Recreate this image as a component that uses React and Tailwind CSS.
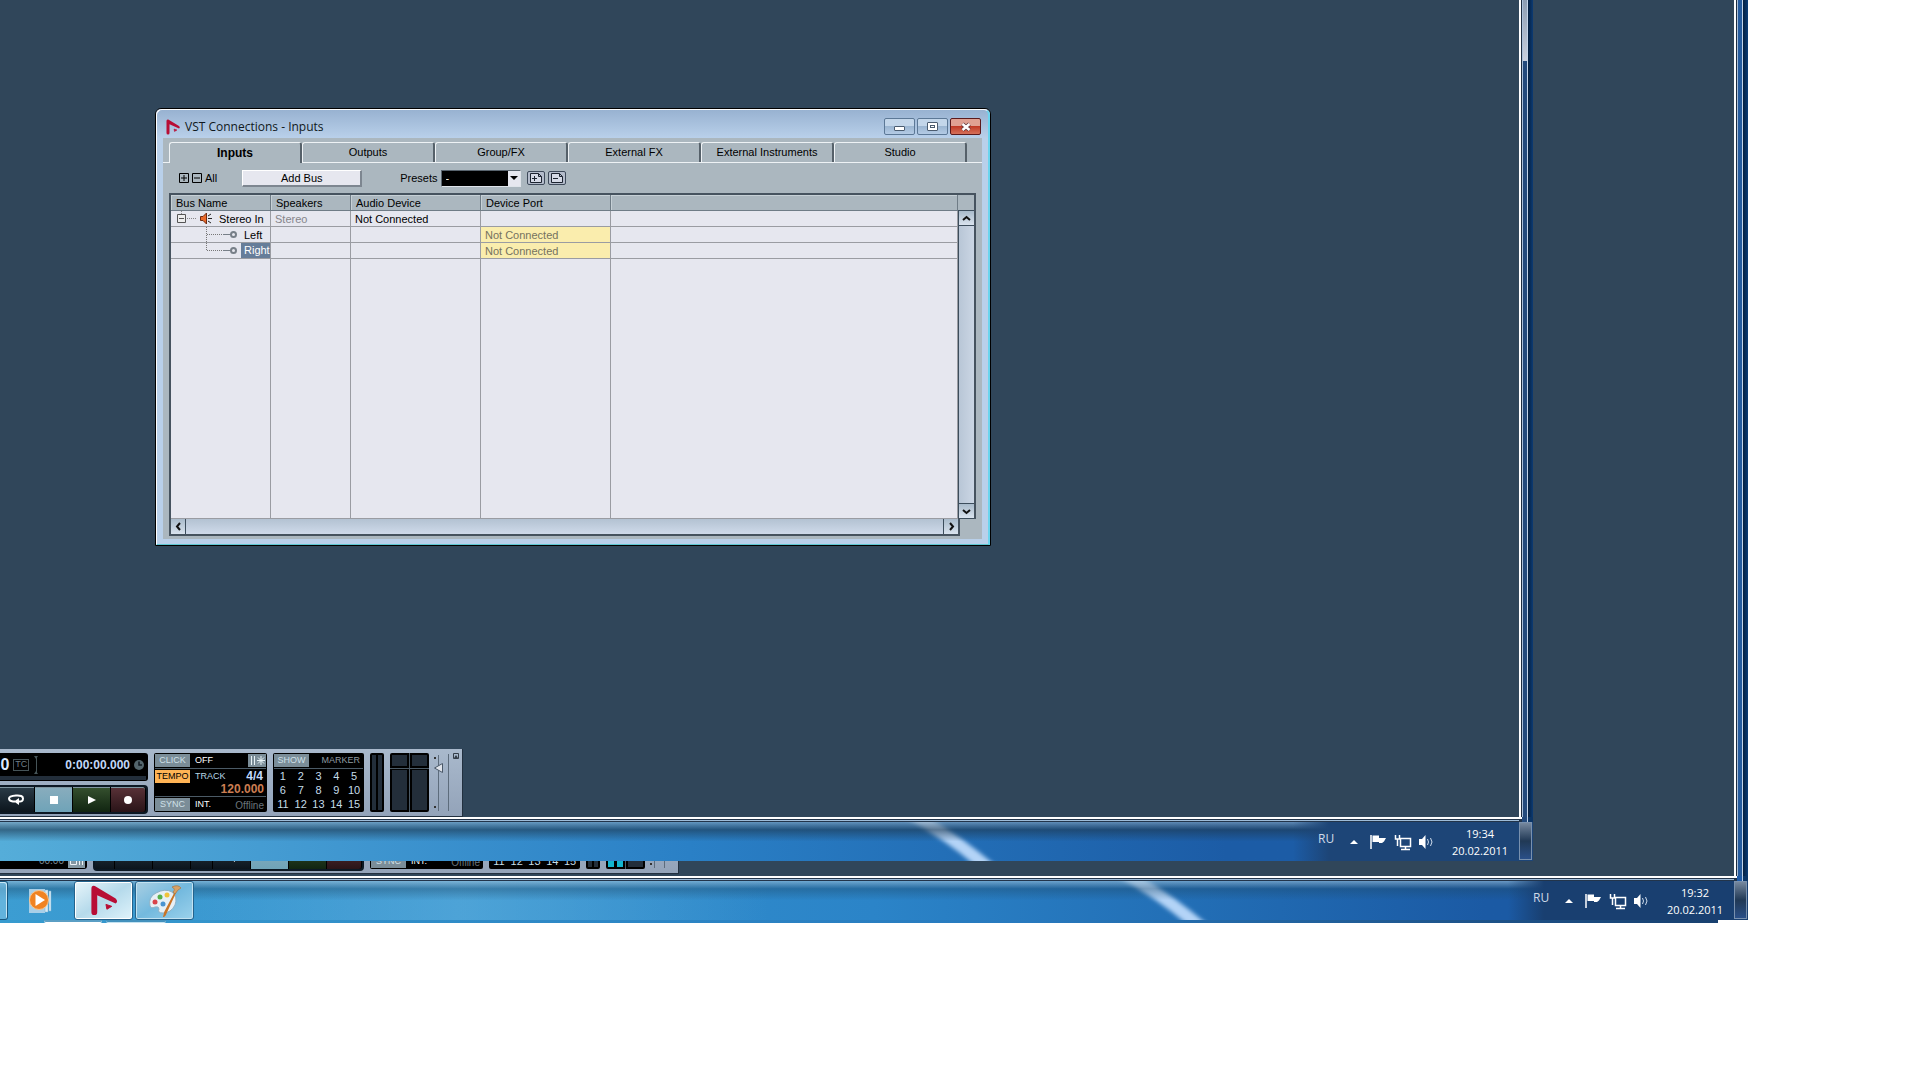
import React from "react";

const TABS = ["Inputs", "Outputs", "Group/FX", "External FX", "External Instruments", "Studio"];
const UI = "font-['Liberation_Sans',Arial,sans-serif]";
const SEGOE = "font-['Open_Sans','Noto_Sans',sans-serif]";

function NuendoMark({ className }) {
  return (
    <svg viewBox="0 0 28 32" className={className} aria-hidden="true">
      <path d="M1 4Q1 0 4.500 1L26 14Q29 17 26 19L7 10.500V28Q7 31 4 31T1 28Z" fill="#b80d35" />
      <path d="M16 20L22 22L17 25Z" fill="#b80d35" stroke="#b80d35" />
    </svg>
  );
}

function CaptionButton({ label, close, children }) {
  return (
    <button
      aria-label={label}
      className={
        close
          ? "flex h-[17px] w-[31px] items-center justify-center rounded-[2px] border border-[#5b1a1c] bg-linear-to-b from-[#e0a193] from-45% via-[#c03a26] via-50% to-[#d5705a]"
          : "flex h-[17px] w-[31px] items-center justify-center rounded-[2px] border border-[#5c7896] bg-linear-to-b from-[#c3d6ea] from-45% via-[#9cb6d2] via-50% to-[#b4cbe5]"
      }
    >
      {children}
    </button>
  );
}

function ScrollButton({ label, d, className }) {
  return (
    <button aria-label={label} className={`flex h-[15px] w-[15px] shrink-0 items-center justify-center border-[#3c4d5c] bg-linear-to-b from-[#a9bbcb] to-[#d9e3ee] ${className}`}>
      <svg width="9" height="9" viewBox="0 0 9 9" fill="none" stroke="#111" strokeWidth="2">
        <path d={d} />
      </svg>
    </button>
  );
}

function PresetButton({ label, d }) {
  return (
    <button aria-label={label} className="flex h-[14px] w-[18px] items-center justify-center rounded-[2px] border border-[#3e4a5a] bg-[#b4bccb]">
      <svg width="14" height="10" viewBox="0 0 14 10" fill="none" stroke="#1c2430">
        <path d="M1.500 .5H9.500L12.500 3.500V9.500H1.500ZM9.500 .5V3.500H12.500" fill="#d5dae6" />
        <path d={d} />
      </svg>
    </button>
  );
}

function ExpandBox({ plus }) {
  return (
    <svg width="10" height="10" viewBox="0 0 10 10" fill="none" stroke="#000">
      <path d={plus ? "M.5 .5H9.500V9.500H.5ZM2 5H8M5 2V8" : "M.5 .5H9.500V9.500H.5ZM2 5H8"} />
    </svg>
  );
}

function BusTable() {
  const cell = "overflow-hidden border-r border-b border-[#9a9ca2] p-0 pl-1 whitespace-nowrap";
  const head = "border-r border-b border-[#6f7c86] p-0 pl-[5px] text-left font-normal shadow-[inset_1px_1px_0_#c6d0d6]";
  return (
    <table className="h-full w-full table-fixed border-separate border-spacing-0 bg-[#e6e7ef] leading-[14px]">
      <colgroup>
        <col className="w-[100px]" />
        <col className="w-[80px]" />
        <col className="w-[130px]" />
        <col className="w-[130px]" />
        <col />
      </colgroup>
      <thead className="bg-[#abb7bf]">
        <tr className="h-4">
          <th className={head}>Bus Name</th>
          <th className={head}>Speakers</th>
          <th className={head}>Audio Device</th>
          <th className={head}>Device Port</th>
          <th className={head}></th>
        </tr>
      </thead>
      <tbody>
        <tr className="h-4">
          <td className={cell}>
            <div className="flex items-center">
              <svg width="38" height="15" viewBox="0 0 38 15" fill="none" className="mr-[6px] shrink-0">
                <path d="M2.500 3.500H10.500V11.500H2.500ZM4 7.500H9" fill="#eee" stroke="#555" />
                <path d="M6.500 0V3M12 7.500H22" stroke="#888" strokeDasharray="1 1" />
                <path d="M25.500 5.500H28L31.500 2V13L28 9.500H25.500Z" fill="#e8692a" stroke="#6d2a10" />
                <path d="M33 5L36 3M33 7.500H37M33 10L36 12" stroke="#222" />
              </svg>
              Stereo In
            </div>
          </td>
          <td className={`${cell} text-[#85858b]`}>Stereo</td>
          <td className={cell}>Not Connected</td>
          <td className={cell}></td>
          <td className={cell}></td>
        </tr>
        {["Left", "Right"].map((name) => (
          <tr key={name} className="h-4">
            <td className={cell}>
              <div className="flex items-center">
                <svg width="66" height="15" viewBox="0 0 66 15" fill="none" className="shrink-0">
                  <path d={name === "Left" ? "M31.500 0V15M32 7.500H47" : "M31.500 0V7.500H47"} stroke="#777" strokeDasharray="1 1" />
                  <path d="M48 7.500H56" stroke="#777f88" />
                  <circle cx="58.500" cy="7.500" r="2.500" stroke="#777f88" strokeWidth="2" />
                </svg>
                <span className={name === "Right" ? "grow bg-[#667d99] pl-[3px] leading-[15px] text-white" : "grow pl-[3px]"}>{name}</span>
              </div>
            </td>
            <td className={cell}></td>
            <td className={cell}></td>
            <td className={`${cell} bg-[#faedad] text-[#75725f]`}>Not Connected</td>
            <td className={cell}></td>
          </tr>
        ))}
        <tr>
          <td className={cell}></td>
          <td className={cell}></td>
          <td className={cell}></td>
          <td className={cell}></td>
          <td className={cell}></td>
        </tr>
      </tbody>
    </table>
  );
}

function VstWindow() {
  return (
    <section className={`absolute top-[108px] left-[155px] flex h-[438px] w-[836px] flex-col rounded-t-md border border-black bg-[#b9d0ea] text-[11px] text-black ${UI}`}>
      <div className="flex grow flex-col rounded-t-md border-t border-r-2 border-b border-l border-t-white border-r-[#6bd5ee] border-b-[#5ec6d2] border-l-white bg-linear-to-b from-[#98b2d1] to-[#b9d0ea] to-[28px] px-[6px] pb-[5px]">
        <header className="flex h-7 items-center pt-[5px] pr-[1px] pl-[3px]">
          <NuendoMark className="h-4 w-[14px]" />
          <h1 className={`ml-[5px] grow text-[12px] leading-4 text-[#101820] ${SEGOE}`}>VST Connections - Inputs</h1>
          <div className="flex gap-[2px]">
            <CaptionButton label="Minimize">
              <span className="mt-1 h-[5px] w-[11px] rounded-[1px] border border-[#4b5c70] bg-white" />
            </CaptionButton>
            <CaptionButton label="Maximize">
              <span className="flex h-[9px] w-[11px] items-center justify-center rounded-[1px] border border-[#4b5c70] bg-white">
                <span className="h-[3px] w-[5px] border border-[#4b5c70]" />
              </span>
            </CaptionButton>
            <CaptionButton label="Close" close>
              <svg width="12" height="10" viewBox="0 0 12 10">
                <path d="M2.500 2L9.500 8M9.500 2L2.500 8" stroke="#5c3438" strokeWidth="4" />
                <path d="M2.500 2L9.500 8M9.500 2L2.500 8" stroke="#fff" strokeWidth="2.500" />
              </svg>
            </CaptionButton>
          </div>
        </header>
        <div className="flex grow flex-col bg-[#abb7bf]">
          <nav className="flex h-[25px] border-b border-[#eef2f5] pt-1 pr-[15px] pl-[6px]">
            {TABS.map((t, i) => (
              <button
                key={t}
                className={
                  i === 0
                    ? "-mb-px h-[21px] flex-1 rounded-t-[3px] border-t border-r-2 border-l border-t-[#eef2f5] border-r-[#56616a] border-l-[#eef2f5] bg-[#abb7bf] text-[12px] font-bold"
                    : "h-5 flex-1 rounded-t-[3px] border-t border-r-2 border-l border-t-[#eef2f5] border-r-[#56616a] border-l-[#eef2f5]"
                }
              >
                {t}
              </button>
            ))}
          </nav>
          <div className="flex h-[30px] items-center pl-4">
            <button className="flex items-center gap-[3px]">
              <ExpandBox plus />
              <ExpandBox />
              <span>All</span>
            </button>
            <button className="ml-[25px] h-[17px] w-[120px] border-t border-r-2 border-b-2 border-l border-t-white border-r-[#7d8690] border-b-[#7d8690] border-l-white bg-[#e6e7ef] leading-[14px]">
              Add Bus
            </button>
            <label htmlFor="preset" className="mr-[3px] ml-[38px]">Presets</label>
            <div className="relative h-[17px] w-20 border border-[#dfe4ea] border-t-[#59646e] border-l-[#59646e] bg-black">
              <select id="preset" className="block h-full w-full appearance-none bg-black pl-1 leading-[14px] text-white">
                <option>-</option>
              </select>
              <span className="pointer-events-none absolute top-0 right-0 flex h-[15px] w-3 items-center justify-center bg-[#e6e7ef]">
                <svg width="8" height="4" viewBox="0 0 8 4"><path d="M0 0H8L4 4Z" /></svg>
              </span>
            </div>
            <div className="ml-[6px] flex gap-[3px]">
              <PresetButton label="Store preset" d="M3 5.500H8M5.500 3V8" />
              <PresetButton label="Remove preset" d="M3 5.500H8" />
            </div>
          </div>
          <div className="mb-[3px] ml-[6px] flex grow flex-col pr-[6px]">
            <div className="flex grow border-2 border-b-0 border-[#46535f]">
              <div className="min-w-0 grow">
                <BusTable />
              </div>
              <div className="flex w-4 shrink-0 flex-col bg-[#abb7bf] pt-[15px]">
                <div className="flex grow flex-col items-stretch justify-between border-t border-b border-l border-[#3c4d5c] bg-linear-to-r from-[#b8c6d6] to-[#cbd6e4]">
                  <ScrollButton label="Scroll up" d="M1 6L4.500 3L8 6" className="border-b" />
                  <ScrollButton label="Scroll down" d="M1 3L4.500 6L8 3" className="border-t" />
                </div>
              </div>
            </div>
            <div className="mr-4 flex h-[17px] justify-between border-r-2 border-b-2 border-l-2 border-[#46535f] bg-linear-to-b from-[#b3c2d2] to-[#cfdaea]">
              <ScrollButton label="Scroll left" d="M6 1L3 4.500L6 8" className="border-r" />
              <ScrollButton label="Scroll right" d="M3 1L6 4.500L3 8" className="border-l" />
            </div>
          </div>
        </div>
      </div>
    </section>
  );
}

function TransportButton({ label, className, children }) {
  return (
    <button aria-label={label} className={`flex shrink-0 items-center justify-center border-r border-black shadow-[inset_0_1px_0_#7f95a0] ${className}`}>
      {children}
    </button>
  );
}

function Tag({ className, children }) {
  return <span className={`flex h-[13px] w-[35px] shrink-0 items-center justify-center ${className}`}>{children}</span>;
}

function FormatPanel() {
  return (
    <div className="mr-[6px] flex h-[59px] w-[87px] items-end justify-end gap-1 rounded-r-[3px] bg-black px-[2px] pb-px text-[10px] text-[#7c8a94]">
      <span>00.00</span>
      <svg width="17" height="13" viewBox="0 0 17 13" fill="none" stroke="#eef3f6">
        <path d="M0 0H17V13H0Z" fill="#8497a2" stroke="none" />
        <path d="M2.500 3.500H8.500V9.500H2.500ZM11.500 3V10M14.500 3V10" />
      </svg>
    </div>
  );
}

function Transport({ active }) {
  const dark = "bg-linear-to-b from-[#2b3c48] to-[#0c151d]";
  return (
    <section className={`flex h-[68px] shrink-0 border-r border-b border-[#22303f] bg-linear-to-b from-[#a9b9cc] to-[#93a3b9] pt-1 text-[9px] text-[#b9d7e6] ${UI}`}>
      {active && <FormatPanel />}
      <div className="w-[271px]">
        <div className="flex h-7 flex-col rounded-[3px] bg-black">
          <div className="flex h-[23px] items-center justify-end pr-1">
            <b className="text-[16px] leading-5 text-[#dbe9ff]">0</b>
            <span className="ml-1 flex h-3 w-4 items-center justify-center border border-[#465458] text-[#6f7f86]">TC</span>
            <svg width="5" height="18" viewBox="0 0 5 18" className="ml-[5px]">
              <path d="M2.500 0V18" stroke="#465458" />
              <path d="M0 0H4L2 3ZM0 18H4L2 15Z" fill="#465458" />
            </svg>
            <b className="ml-[26px] text-[12px] text-[#c2d8f8]">0:00:00.000</b>
            <svg width="10" height="10" viewBox="0 0 10 10" className="ml-1">
              <circle cx="5" cy="5" r="5" fill="#53656c" />
              <path d="M5 1.500V5H8" fill="none" stroke="#101820" strokeWidth="1.500" />
            </svg>
          </div>
          <div className="mx-[2px] h-[4px] bg-[#232e3a]" />
        </div>
        <div className="mt-[4px] flex h-[29px] rounded-[4px] border-2 border-[#0c1824] bg-[#0c1824]">
          <TransportButton label="To start" className={`w-[20px] ${dark}`} />
          <TransportButton label="Rewind" className={`w-[38px] ${dark}`} />
          <TransportButton label="Forward" className={`w-[38px] ${dark}`} />
          <TransportButton label="To end" className={`w-[22px] ${dark}`} />
          <TransportButton label="Cycle" className={`w-[38px] ${dark}`}>
            <svg width="16" height="11" viewBox="0 0 16 11" fill="none" stroke="#fff" strokeWidth="2">
              <path d="M7 7.500H5Q1 7 1 4.500T8 1.500T15 4.500T11 7.500H10" />
              <path d="M6 7.500L11 4V11Z" fill="#fff" stroke="none" />
            </svg>
          </TransportButton>
          <TransportButton label="Stop" className="w-[38px] bg-linear-to-b from-[#89adbd] to-[#6fa3b8]">
            <span className="h-2 w-2 bg-white" />
          </TransportButton>
          <TransportButton label="Play" className="w-[38px] bg-linear-to-b from-[#36512f] to-[#112511]">
            <svg width="8" height="8" viewBox="0 0 8 8"><path d="M0 0L8 4L0 8Z" fill="#fff" /></svg>
          </TransportButton>
          <TransportButton label="Record" className="grow rounded-r-[3px] bg-linear-to-b from-[#5a3238] to-[#2a1418]">
            <span className="h-2 w-2 rounded-full bg-white" />
          </TransportButton>
        </div>
      </div>
      <div className="ml-[6px] flex h-[59px] w-[113px] flex-col rounded-[2px] bg-black px-px pt-px">
        <div className="flex h-[15px] border-b border-[#4b5a66]">
          <Tag className="bg-[#7b8d98] text-[#cfe0e8]">CLICK</Tag>
          <span className="ml-[5px] grow text-white">OFF</span>
          <svg width="18" height="13" viewBox="0 0 18 13" stroke="#e8f2f6" fill="none">
            <path d="M0 0H18V13H0Z" fill="#7b8d98" stroke="none" />
            <path d="M3.500 2V11M6.500 2V11M13 2V11M9 6.500H17M10 3.500L16 9.500M16 3.500L10 9.500" />
          </svg>
        </div>
        <div className="grid h-[28px] grid-cols-[35px_1fr] grid-rows-[14px_12px] border-b border-[#4b5a66] pt-px">
          <Tag className="bg-[#ffb455] text-black">TEMPO</Tag>
          <div className="flex justify-between pr-[3px] pl-[5px] leading-[13px]">
            <span>TRACK</span>
            <b className="text-[12px] text-[#c2dcff]">4/4</b>
          </div>
          <b className="col-span-2 pr-[2px] text-right text-[12px] leading-[11px] text-[#cc7e52]">120.000</b>
        </div>
        <div className="flex h-[15px] pt-px">
          <Tag className="bg-[#7b8d98] text-[#cfe0e8]">SYNC</Tag>
          <span className="ml-[5px] grow text-white">INT.</span>
          <span className="pr-[2px] text-[10px] text-[#6b747c]">Offline</span>
        </div>
      </div>
      <div className="ml-[6px] flex h-[59px] w-[91px] flex-col rounded-[2px] bg-black px-px pt-px">
        <div className="flex h-[15px] justify-between border-b border-[#4b5a66]">
          <Tag className="bg-[#7b8d98] text-[#cfe0e8]">SHOW</Tag>
          <span className="pr-[3px] text-[#909ba2]">MARKER</span>
        </div>
        <div className="grid h-[42px] grid-cols-5 text-center text-[11px] leading-[14px] text-[#c5dde9]">
          {Array.from({ length: 15 }, (_, i) => <span key={i}>{i + 1}</span>)}
        </div>
      </div>
      <div className="ml-[6px] flex h-[59px] w-[14px] justify-between rounded-[2px] bg-black p-[2px]">
        <span className="w-1 bg-[#232e3a]" />
        <span className="w-1 bg-[#232e3a]" />
      </div>
      <div className="ml-[6px] grid h-[59px] w-[39px] grid-cols-2 grid-rows-[11px_1fr] gap-x-[5px] gap-y-[4px] rounded-[2px] bg-[linear-gradient(#4b5a66,#4b5a66),linear-gradient(#4b5a66,#4b5a66),linear-gradient(#000,#000)] bg-[size:1px_100%,100%_1px,100%_100%] bg-[position:19px_0,0_15px,0_0] bg-no-repeat p-[2px]">
        <span className="bg-[#232e3a]" />
        <span className="bg-[#232e3a]" />
        {active ? (
          <span className="flex gap-[3px] bg-black">
            <span className="grow bg-[#12b5cf]" />
            <span className="grow bg-[#12b5cf]" />
          </span>
        ) : (
          <span className="bg-[#232e3a]" />
        )}
        <span className="bg-[#232e3a]" />
      </div>
      <svg width="29" height="59" viewBox="0 0 29 59" fill="none" className="ml-1">
        <path d="M5.500 2V58M15.500 1V58" stroke="#5d6c7c" />
        <path d="M1 4h2v2h-2zM1 53h2v2h-2z" fill="#333" />
        <path d="M9.500 10.500V19.500L1.500 15Z" fill="#dfe3ea" stroke="#4a5868" />
        <path d="M20.500 .5H25.500V5.500H20.500Z" stroke="#333d48" />
        <path d="M21 5L23 2L25 5Z" fill="#333d48" />
      </svg>
    </section>
  );
}

function Tray({ time }) {
  return (
    <div className={`flex h-full items-stretch text-[11px] text-white ${SEGOE}`}>
      <span className="mt-[9px] w-8 text-[12px] leading-4 text-[#cfdbe8]">RU</span>
      <svg width="84" height="18" viewBox="0 0 84 18" fill="none" className="mt-[11px]">
        <path d="M0 11L4 7L8 11Z" fill="#fff" />
        <path d="M21 2V16" stroke="#fff" strokeWidth="1.500" />
        <path d="M22.500 2.500H29V5H36L34 8.500L32 10H29V9H22.500Z" fill="#fff" />
        <path d="M50.500 5.500H60.500V13.500H50.500ZM55.500 14V16M51 16.500H60" stroke="#fff" strokeWidth="1.500" />
        <path d="M45.500 2V6H49.500V2M47.500 6V13" stroke="#fff" strokeWidth="1.500" />
        <path d="M69 6H72L75.500 2V16L72 12H69Z" fill="#fff" />
        <path d="M77.500 6Q79.500 9 77.500 12M80.500 5Q83.500 9 80.500 13" stroke="#cfdcec" />
      </svg>
      <div className="mt-[3px] w-[85px] pl-[7px] text-center leading-[17px]">
        <div>{time}</div>
        <div>20.02.2011</div>
      </div>
      <button aria-label="Show desktop" className="mr-px mb-px w-[13px] border border-[#7991ae] bg-linear-to-b from-[#76889e] via-[#213955] via-50% to-[#2a4f88]" />
    </div>
  );
}

/* White, navy and pale hairlines that frame a maximized window from below. */
function BottomFrame({ edge }) {
  return (
    <div className="flex h-[5px] shrink-0">
      <div className="grow border-t-2 border-white bg-[#22344a]">
        <div className="mt-px h-px bg-[#9dbbd8]" />
      </div>
      <div className="flex w-[14px] shrink-0">
        <div className="w-[3px] border-t-2 border-white bg-[#22344a]" />
        <div className={`grow ${edge}`} />
        <div className="w-px bg-[#b7cbe2]" />
        <div className="w-[5px] bg-[#0b3566]" />
      </div>
    </div>
  );
}

function SideFrame({ children, edge }) {
  return (
    <div className="flex w-[14px] shrink-0">
      <div className="w-[2px] bg-white" />
      <div className="w-px bg-[#1d2c40]" />
      <div className="w-px bg-[#a9bfd8]" />
      <div className={`w-1 ${edge}`}>{children}</div>
      <div className="w-px bg-[#c3d4e8]" />
      <div className="w-[5px] bg-linear-to-r from-[#06203f] to-[#0b3b75]" />
    </div>
  );
}

function Streak({ className }) {
  return (
    <svg width="130" height="40" viewBox="0 0 130 40" preserveAspectRatio="none" className={`pointer-events-none absolute top-0 h-full ${className}`} aria-hidden="true">
      <defs>
        <filter id="soft" x="-20%" y="-20%" width="140%" height="140%"><feGaussianBlur stdDeviation="2" /></filter>
      </defs>
      <path d="M14 -6H38Q74 16 108 46H88Q54 16 14 -6Z" fill="#b4d4f7" filter="url(#soft)" />
    </svg>
  );
}

export default function App() {
  return (
    <main className="flex h-screen min-h-[900px] flex-col overflow-hidden bg-white pr-[172px] pb-[157px]">
      <div className="flex min-h-0 grow">
        <div className="flex min-w-0 grow flex-col bg-[#30465a]">
          <div className="mr-[201px] flex min-h-0 grow flex-col">
            <div className="flex min-h-0 grow">
              <div className="relative flex min-w-0 grow flex-col justify-end">
                <VstWindow />
                <div className="flex w-[463px] justify-end overflow-hidden">
                  <Transport />
                </div>
              </div>
              <SideFrame edge="bg-[#234a7c]">
                <div className="h-[61px] bg-linear-to-b from-[#8c9db2] to-[#c9d0de]" />
              </SideFrame>
            </div>
            <BottomFrame edge="bg-[#234a7c]" />
            <footer className="relative flex h-[39px] shrink-0 justify-end overflow-hidden bg-linear-to-r from-[#55add9] via-[#2a80c6] via-45% to-[#1c5ca6] to-80%">
              <Streak className="left-[58%]" />
              <div className="absolute inset-0 bg-linear-to-b from-[#8aa6bd]/60 via-[#1d3850]/60 via-20% to-transparent to-50%" />
              <div className="absolute inset-y-0 right-0 w-[240px] bg-linear-to-r from-transparent to-[#1d4577] to-15%" />
              <div className="relative"><Tray time="19:34" /></div>
            </footer>
          </div>
          <div className="flex h-[15px] shrink-0 items-end overflow-hidden pb-[2px]">
            <Transport active />
          </div>
        </div>
        <SideFrame edge="bg-[#265c9e]" />
      </div>
      <BottomFrame edge="bg-[#1f5ba8]" />
      <footer className="relative flex h-[39px] shrink-0 justify-between overflow-hidden bg-linear-to-r from-[#3c9dd2] via-[#2b84c8] via-50% to-[#1b5aa4] to-85%">
        <div className="absolute inset-y-0 left-[9%] w-[35%] bg-linear-to-r from-transparent via-[#5fb0de]/60 to-transparent" />
        <Streak className="left-[63%]" />
        <div className="absolute inset-0 bg-linear-to-b from-[#9cc0d8]/60 via-[#1d4868]/40 via-20% to-transparent to-50%" />
        <div className="absolute inset-y-0 right-0 w-[240px] bg-linear-to-r from-transparent to-[#193f70] to-15%" />
        <nav className="relative flex" aria-label="Taskbar">
          <button aria-label="Previous application" className="h-[39px] w-2 rounded-r-[3px] border border-l-0 border-[#17577f] bg-[#7cc2e4]/60 shadow-[inset_-1px_1px_0_#c7e6f4]" />
          <button aria-label="Media Player" className="flex w-[66px] items-center justify-center">
            <svg width="28" height="26" viewBox="0 0 28 26">
              <path d="M2 1H18V25H2Z" fill="#a8cfe8" />
              <path d="M18 2H21V24H18ZM22 3H24V23H22Z" fill="#d7ebf6" stroke="#7fb0d0" strokeWidth=".5" />
              <circle cx="12" cy="12" r="9.500" fill="#f08322" stroke="#f9c58d" />
              <path d="M8.500 6L18 12L8.500 18Z" fill="#fff" />
            </svg>
          </button>
          <button aria-label="Nuendo" className="flex h-[39px] w-[59px] items-center justify-center rounded-[3px] border border-[#23638d] bg-linear-to-br from-[#e8f5fa] via-[#b5daeb] to-[#dff3fb] shadow-[inset_0_0_0_1px_#fff]">
            <NuendoMark className="h-[31px] w-7" />
          </button>
          <button aria-label="Paint" className="ml-[2px] flex h-[39px] w-[59px] items-center justify-center rounded-[3px] border border-[#23638d] bg-linear-to-br from-[#a9cfe2] via-[#73b9de] to-[#9bd2ec] shadow-[inset_0_0_0_1px_#c3e2f1]">
            <svg width="34" height="32" viewBox="0 0 34 32">
              <path d="M2 21Q0 12 8 8Q17 3 24 7Q30 12 27 20Q23 28 15 28Q9 28 11 24Q11 21 7 22Q3 24 2 21Z" fill="#e7f0f5" stroke="#8fb2c6" />
              <circle cx="7" cy="17" r="2.500" fill="#d9434a" />
              <circle cx="12" cy="12" r="2.500" fill="#56b04a" />
              <circle cx="19" cy="10" r="2.500" fill="#f0c33a" />
              <circle cx="15" cy="19" r="2.500" fill="#4a93cf" />
              <path d="M28 6L17 30L16 31L17 27Z" fill="#e38a35" stroke="#c97426" strokeWidth="1.500" />
              <path d="M24 2Q30 -1 33 3L30 5L27 9L25 7Q28 4 24 2Z" fill="#d7a165" stroke="#a97642" strokeWidth=".7" />
            </svg>
          </button>
        </nav>
        <div className="relative"><Tray time="19:32" /></div>
      </footer>
      <div className="mr-[30px] flex h-[3px] shrink-0 bg-linear-to-r from-[#379bcf] via-[#2779be] via-60% to-[#18406f]">
        <div className="ml-11 w-[58px] rounded-b-[2px] border-b border-white bg-[#5a9ec4]" />
        <div className="ml-1 w-[60px] rounded-b-[2px] border-b border-[#c3e2f1] bg-[#4391bd]" />
      </div>
    </main>
  );
}
